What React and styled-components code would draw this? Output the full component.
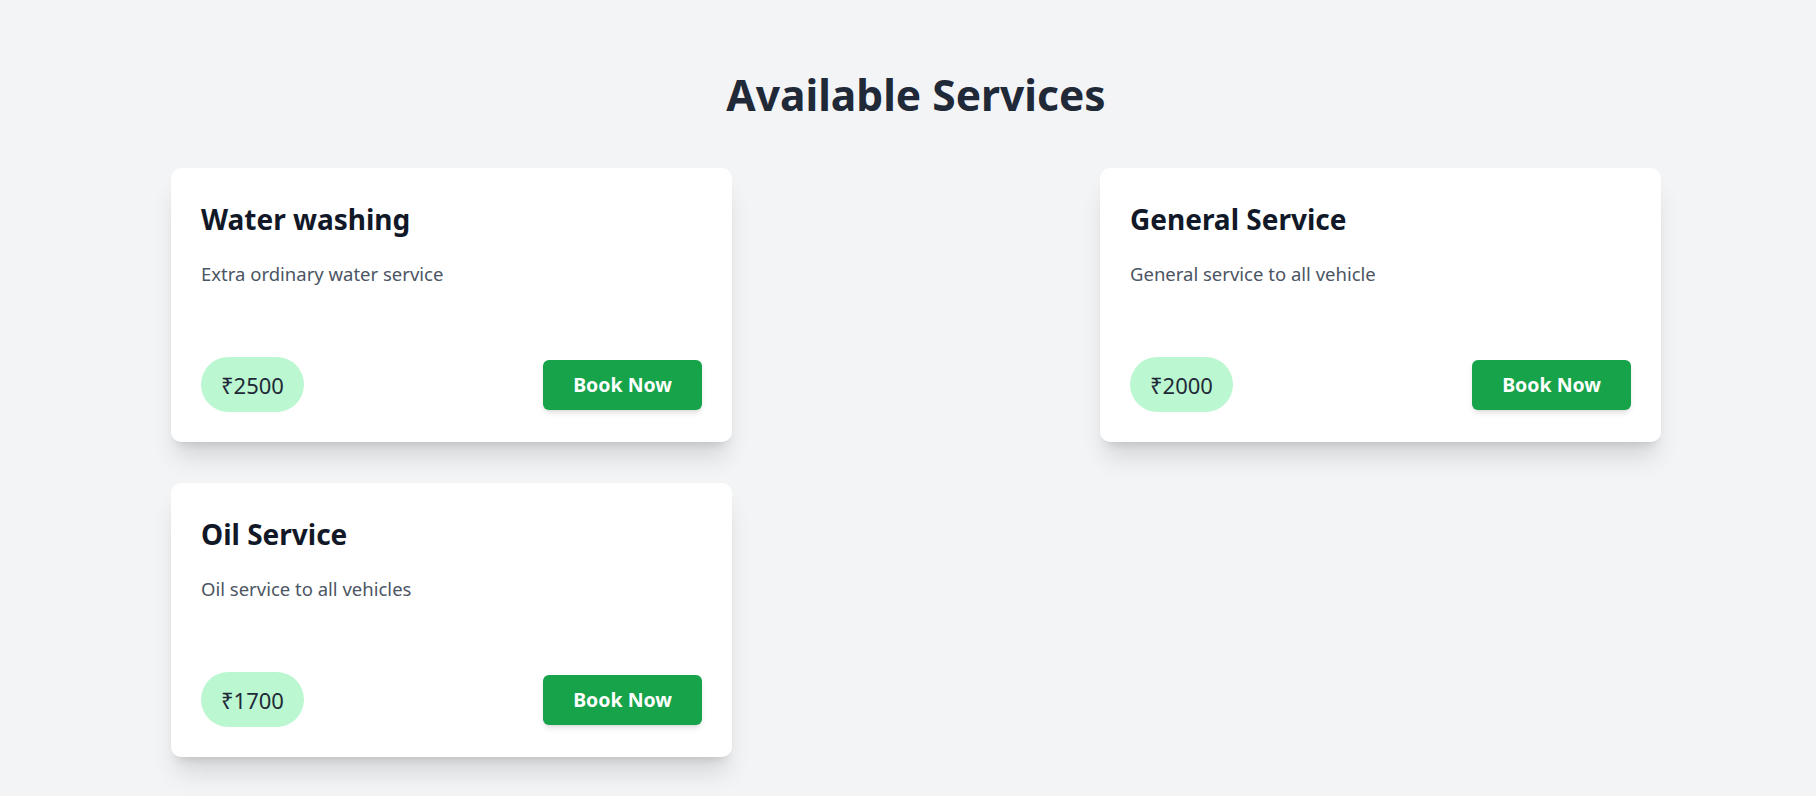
import React from "react";
import styled, { createGlobalStyle } from "styled-components";

const GlobalStyle = createGlobalStyle`
  html, body {
    margin: 0;
    padding: 0;
    background: #f3f4f6;
  }
  body {
    font-family: "Noto Sans", "Open Sans", sans-serif;
    -webkit-font-smoothing: antialiased;
  }
  * { box-sizing: border-box; }
`;

const Page = styled.main`
  min-height: 796px;
  padding: 69px 0 40px 16px;
`;

const Heading = styled.h1`
  margin: 0 0 48px;
  text-align: center;
  font-size: 42.5px;
  line-height: 51px;
  font-weight: 700;
  color: #1f2937;
`;

const Grid = styled.section`
  width: 1490px;
  margin: 0 auto;
  display: flex;
  flex-wrap: wrap;
  justify-content: space-between;
  row-gap: 41px;
`;

const Card = styled.article`
  width: 561px;
  min-height: 274px;
  padding: 30px;
  background: #ffffff;
  border-radius: 10px;
  box-shadow: 0 20px 25px -5px rgba(0, 0, 0, 0.12),
    0 8px 10px -6px rgba(0, 0, 0, 0.12);
  display: flex;
  flex-direction: column;
`;

const Title = styled.h2`
  margin: 0;
  font-size: 28px;
  line-height: 42px;
  font-weight: 700;
  color: #111827;
`;

const Description = styled.p`
  margin: 20px 0 0;
  font-size: 18.5px;
  line-height: 28px;
  color: #4b5563;
`;

const Footer = styled.div`
  margin-top: auto;
  display: flex;
  align-items: center;
  justify-content: space-between;
`;

const Price = styled.span`
  display: inline-flex;
  align-items: center;
  height: 55px;
  padding: 0 20px;
  border-radius: 9999px;
  background: #bbf7d0;
  color: #1f2937;
  font-size: 22px;
`;

const BookButton = styled.button`
  height: 50px;
  padding: 0 30px;
  border: none;
  border-radius: 6px;
  background: #16a34a;
  color: #ffffff;
  font-family: inherit;
  font-size: 19.5px;
  font-weight: 700;
  cursor: pointer;
  box-shadow: 0 4px 6px -1px rgba(0, 0, 0, 0.1),
    0 2px 4px -2px rgba(0, 0, 0, 0.1);
`;

const services = [
  { name: "Water washing", desc: "Extra ordinary water service", price: 2500 },
  { name: "General Service", desc: "General service to all vehicle", price: 2000 },
  { name: "Oil Service", desc: "Oil service to all vehicles", price: 1700 },
];

export default function App() {
  return (
    <>
      <GlobalStyle />
      <Page>
        <Heading>Available Services</Heading>
        <Grid>
          {services.map((s) => (
            <Card key={s.name}>
              <Title>{s.name}</Title>
              <Description>{s.desc}</Description>
              <Footer>
                <Price>₹{s.price}</Price>
                <BookButton>Book Now</BookButton>
              </Footer>
            </Card>
          ))}
        </Grid>
      </Page>
    </>
  );
}
